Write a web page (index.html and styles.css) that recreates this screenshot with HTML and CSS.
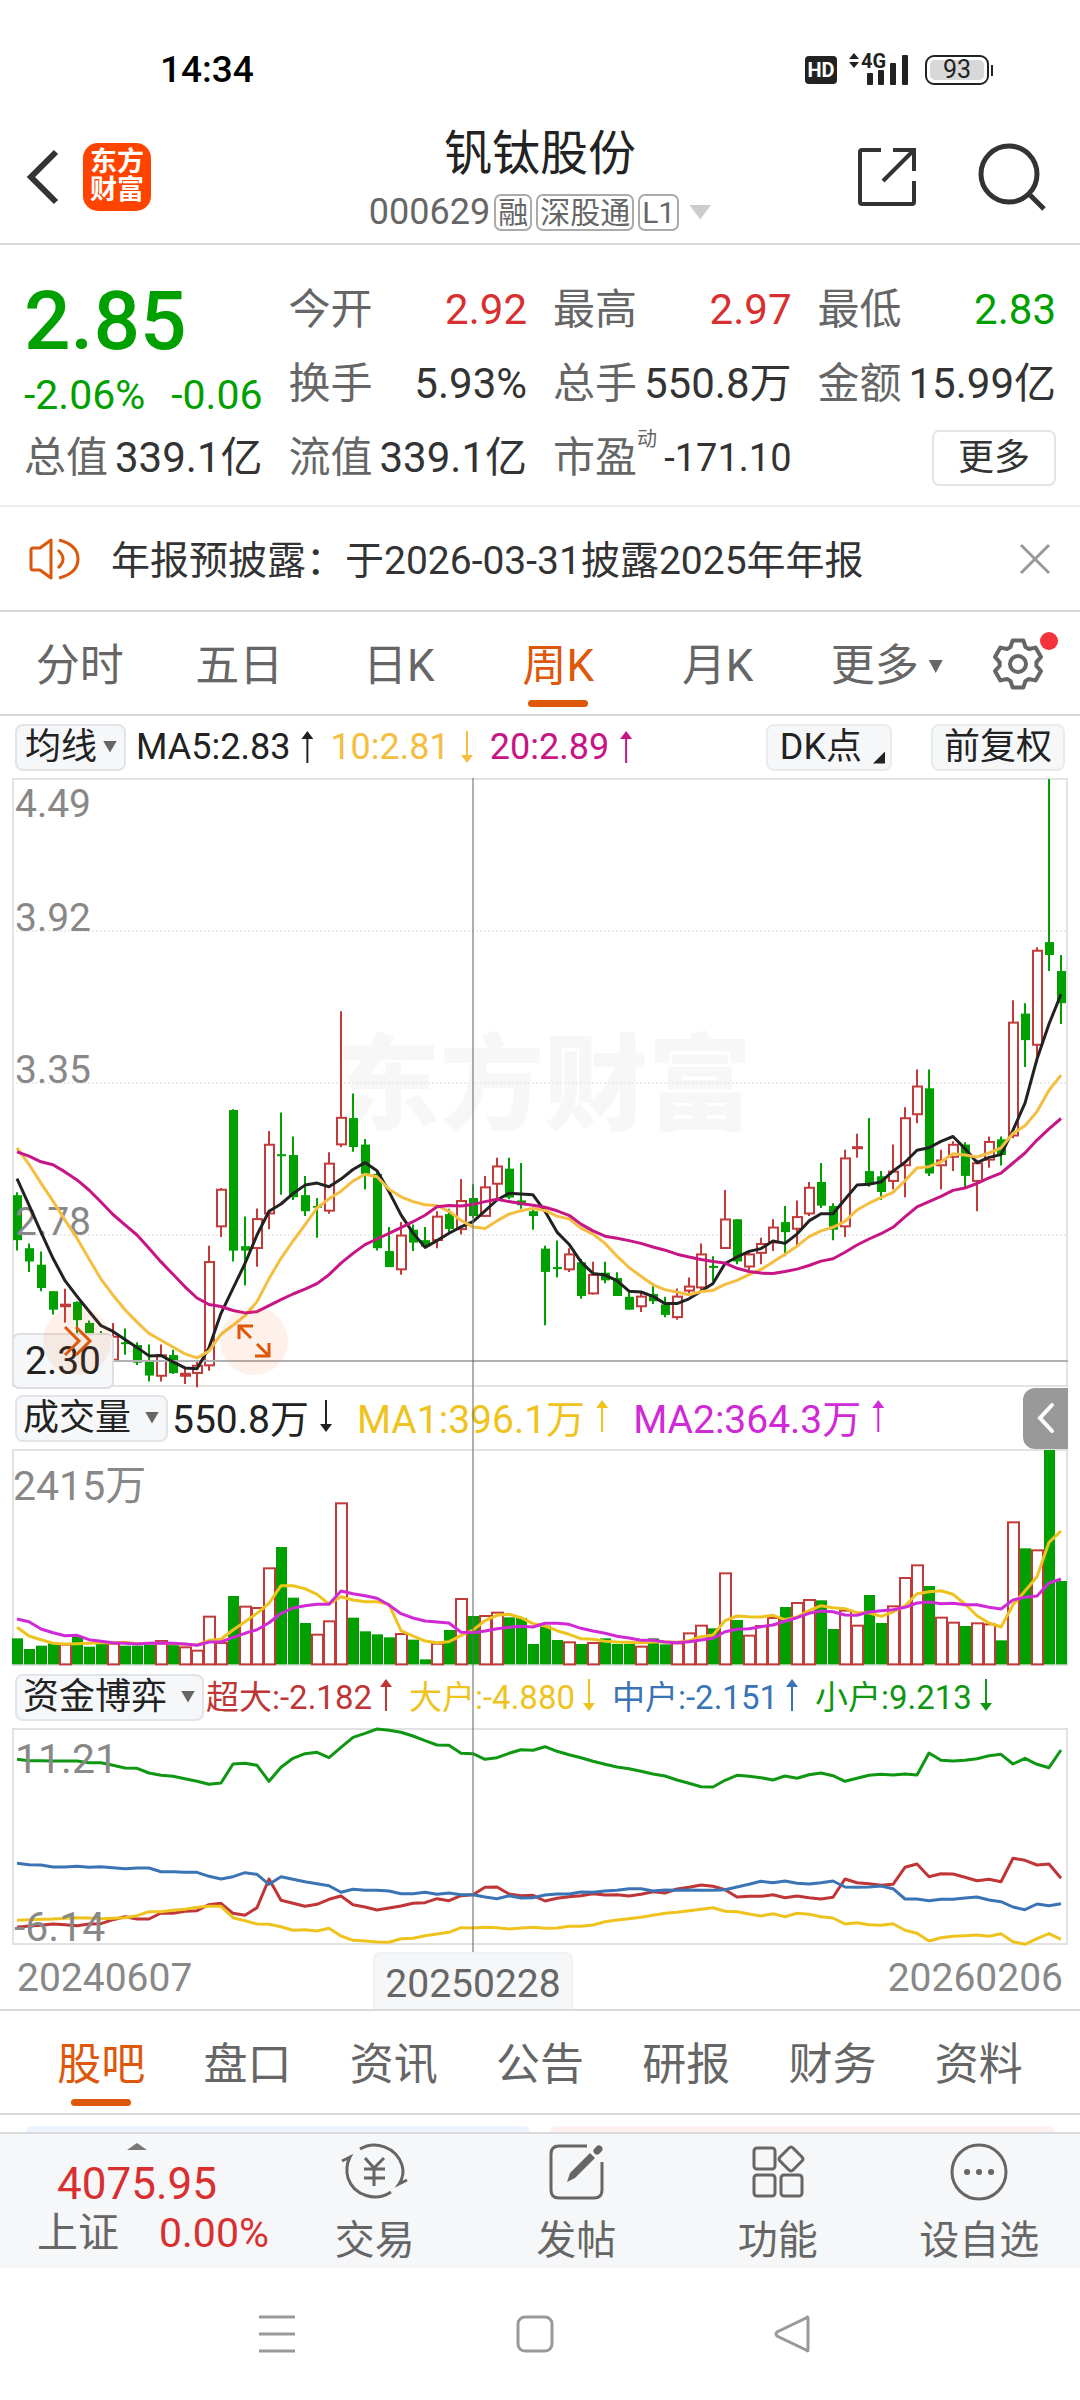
FILE: index.html
```html
<!DOCTYPE html>
<html lang="zh-CN">
<head>
  <meta charset="UTF-8" />
  <meta name="viewport" content="width=device-width, initial-scale=1.0"/>
  <title>钒钛股份 000629</title>
  <link rel="stylesheet" href="styles.css">
</head>
<body>
  <div class="status">
    <span class="clock">14:34</span>
    <div class="status-icons">
      <span class="hd">HD</span>
      <svg class="signal" width="60" height="36" viewBox="0 -4 60 36">
        <path d="M0 6L5 0L10 6ZM0 9H10L5 15Z"/>
        <rect x="18" y="20" width="6" height="12" rx="1"/>
        <rect x="29" y="17" width="6" height="15" rx="1"/>
        <rect x="41" y="10" width="6" height="22" rx="1"/>
        <rect x="53" y="2" width="6" height="30" rx="1"/>
        <text x="12" y="15">4G</text>
      </svg>
      <span class="battery"><span>93</span></span>
    </div>
  </div>

  <header class="header">
    <div class="header-left">
      <button class="icon-btn" aria-label="返回">
        <svg width="34" height="56" viewBox="0 0 34 56"><path d="M30 3L5 28L30 53" fill="none" stroke="#333" stroke-width="6"/></svg>
      </button>
      <div class="logo">东方<br>财富</div>
    </div>
    <div class="title">
      <h1>钒钛股份</h1>
      <div class="code">
        <span>000629</span>
        <span class="tag">融</span>
        <span class="tag">深股通</span>
        <span class="tag">L1</span>
        <i class="triangle light"></i>
      </div>
    </div>
    <div class="header-right">
      <button class="icon-btn" aria-label="分享">
        <svg width="58" height="58" viewBox="0 0 58 58" fill="none" stroke="#333" stroke-width="4">
          <path d="M23 2H4Q2 2 2 4V54Q2 56 4 56H54Q56 56 56 54V33M35 2H56V23M55 3L25 33"/>
        </svg>
      </button>
      <button class="icon-btn" aria-label="搜索">
        <svg width="68" height="68" viewBox="0 0 68 68" fill="none" stroke="#333" stroke-width="5">
          <circle cx="31" cy="31" r="28"/><path d="M51 51L66 66"/>
        </svg>
      </button>
    </div>
  </header>

  <section class="quote">
    <div class="price down">
      <strong>2.85</strong>
      <div class="change"><span>-2.06%</span><span>-0.06</span></div>
    </div>
    <div class="cell"><span>今开</span><b class="up">2.92</b></div>
    <div class="cell"><span>最高</span><b class="up">2.97</b></div>
    <div class="cell"><span>最低</span><b class="down">2.83</b></div>
    <div class="cell"><span>换手</span><b>5.93%</b></div>
    <div class="cell"><span>总手</span><b>550.8万</b></div>
    <div class="cell"><span>金额</span><b>15.99亿</b></div>
    <div class="cell"><span>总值</span><b>339.1亿</b></div>
    <div class="cell"><span>流值</span><b>339.1亿</b></div>
    <div class="cell pe"><span>市盈</span><small>动</small><b>-171.10</b></div>
    <div class="cell end"><button class="more-btn">更多</button></div>
  </section>

  <section class="notice">
    <svg width="52" height="44" viewBox="0 0 52 44" fill="none" stroke="#d9580d" stroke-width="3">
      <path d="M22 3V41L11 33H4Q2 33 2 31V13Q2 11 4 11H11Z" stroke-linejoin="round"/>
      <path d="M29 13Q39 22 29 31M30 3Q49 8 49 22T30 41"/>
    </svg>
    <p>年报预披露：于2026-03-31披露2025年年报</p>
    <button class="icon-btn" aria-label="关闭">
      <svg width="30" height="30" viewBox="0 0 30 30"><path d="M1 1L29 29M29 1L1 29" stroke="#999" stroke-width="3"/></svg>
    </button>
  </section>

  <nav class="periods">
    <button>分时</button>
    <button>五日</button>
    <button>日K</button>
    <button class="active">周K</button>
    <button>月K</button>
    <button>更多<i class="triangle small"></i></button>
    <button class="settings" aria-label="设置">
      <svg width="52" height="52" viewBox="0 0 52 52" fill="none" stroke="#666" stroke-width="4" stroke-linejoin="round">
        <path d="M20.6 2.6H31.4L33.5 9.1L36.9 11L43.6 9.6L49 19L44.4 24.1V27.9L49 33L43.6 42.4L36.9 41L33.5 42.9L31.4 49.4H20.6L18.5 42.9L15.1 41L8.4 42.4L3 33L7.6 27.9V24.1L3 19L8.4 9.6L15.1 11L18.5 9.1Z"/>
        <circle cx="26" cy="26" r="8"/>
      </svg>
      <i class="dot"></i>
    </button>
  </nav>

  <main class="charts">
    <div class="legend ma-legend">
      <span class="picker"><select aria-label="主图指标"><option>均线</option></select></span>
      <span class="c-dark">MA5:2.83<i class="arrow"></i></span>
      <span class="c-orange">10:2.81<i class="arrow fall"></i></span>
      <span class="c-pink">20:2.89<i class="arrow"></i></span>
      <button class="chip dk">DK点</button>
      <button class="chip">前复权</button>
    </div>
    <div class="plot">
      <svg id="price-chart" viewBox="0 0 1056 609"></svg>
      <button class="float-btn forward" aria-label="前进">
        <svg width="28" height="32" viewBox="0 0 28 32"><path d="M2 2L16 16L2 30M13 2L27 16L13 30"/></svg>
      </button>
      <button class="float-btn expand" aria-label="放大">
        <svg width="34" height="34" viewBox="0 0 34 34"><path d="M2 15V2H16M2 2L14 14M32 19V32H18M32 32L20 20"/></svg>
      </button>
    </div>

    <div class="legend vol-legend">
      <span class="picker wide"><select aria-label="副图指标一"><option>成交量</option></select></span>
      <span class="c-dark">550.8万<i class="arrow fall"></i></span>
      <span class="c-yellow">MA1:396.1万<i class="arrow"></i></span>
      <span class="c-purple">MA2:364.3万<i class="arrow"></i></span>
      <button class="collapse" aria-label="展开侧栏">
        <svg width="18" height="30" viewBox="0 0 18 30"><path d="M15 2L3 15L15 28" fill="none" stroke="#fff" stroke-width="4" stroke-linecap="round"/></svg>
      </button>
    </div>
    <div class="plot"><svg id="volume-chart" viewBox="0 0 1056 217"></svg></div>

    <div class="legend fund-legend">
      <span class="picker wide"><select aria-label="副图指标二"><option>资金博弈</option></select></span>
      <span class="c-red">超大:-2.182<i class="arrow"></i></span>
      <span class="c-yellow">大户:-4.880<i class="arrow fall"></i></span>
      <span class="c-blue">中户:-2.151<i class="arrow"></i></span>
      <span class="c-green">小户:9.213<i class="arrow fall"></i></span>
    </div>
    <div class="plot"><svg id="fund-chart" viewBox="0 0 1056 217"></svg></div>

    <div class="dates"><span>20240607</span><span>20260206</span></div>
    <div class="crosshair"></div>
    <div class="date-tip">20250228</div>
  </main>

  <nav class="sections">
    <button class="active">股吧</button>
    <button>盘口</button>
    <button>资讯</button>
    <button>公告</button>
    <button>研报</button>
    <button>财务</button>
    <button>资料</button>
  </nav>
  <div class="cards"><div class="card blue"></div><div class="card pink"></div></div>

  <footer class="toolbar">
    <div class="index">
      <i class="triangle flip"></i>
      <strong>4075.95</strong>
      <div><span>上证</span><b>0.00%</b></div>
    </div>
    <button>
      <svg width="66" height="60" viewBox="0 0 66 60">
        <path d="M18 7C33 -2 54 5 60 23Q63 33 57 42L65 38M49 50C34 60 12 54 6 36Q3 25 8 15L0 19"/>
        <path d="M23 16L32 26L42 16M32 26V44M22 27H43M22 36H43"/>
      </svg>
      交易
    </button>
    <button>
      <svg width="56" height="60" viewBox="0 0 56 60">
        <path d="M39 4H11Q3 4 3 12V48Q3 56 11 56H46Q54 56 54 48V20"/>
        <path d="M49 9L51 7" stroke-width="7" stroke-linecap="round"/>
        <path d="M42 11L47 16L27 36L19 40L22 31Z" fill="#666" stroke="none"/>
      </svg>
      发帖
    </button>
    <button>
      <svg width="54" height="60" viewBox="0 0 54 60">
        <rect x="3" y="6" width="21" height="21" rx="3"/>
        <rect x="3" y="33" width="21" height="21" rx="3"/>
        <rect x="30" y="33" width="21" height="21" rx="3"/>
        <path d="M38 6Q40 4 42 6L51 15Q53 17 51 19L42 28Q40 30 38 28L29 19Q27 17 29 15Z"/>
      </svg>
      功能
    </button>
    <button>
      <svg width="60" height="60" viewBox="0 0 60 60">
        <circle cx="30" cy="30" r="27"/>
        <path d="M18 30H18.1M30 30H30.1M42 30H42.1" stroke-width="6" stroke-linecap="round"/>
      </svg>
      设自选
    </button>
  </footer>

  <div class="sysnav">
    <button aria-label="最近任务"><svg width="38" height="38" viewBox="0 0 38 38"><path d="M1 2H37M1 19H37M1 36H37"/></svg></button>
    <button aria-label="主屏幕"><svg width="38" height="38" viewBox="0 0 38 38"><rect x="2" y="2" width="34" height="34" rx="7"/></svg></button>
    <button aria-label="后退"><svg width="38" height="38" viewBox="0 0 38 38"><path d="M34 3V35Q34 37 32 35L3 21Q1 19 3 17L32 3Q34 1 34 3Z"/></svg></button>
  </div>

  <script src="script.js"></script>
</body>
</html>
```
FILE: styles.css
```css
:root {
  --text: #333;
  --muted: #666;
  --axis: #888;
  --line: #d8dadc;
  --panel: #f6f7f9;
  --accent: #dd580a;
  --up: #d83030;
  --down: #00a000;
}
* {
  box-sizing: border-box;
}
body {
  margin: 0;
  background: #fff;
  color: var(--text);
  font-family: Roboto, "Noto Sans CJK SC", sans-serif;
}
button, select {
  font: inherit;
  color: inherit;
  border: none;
  background: none;
  padding: 0;
  margin: 0;
  cursor: pointer;
}
h1, p {
  margin: 0;
  font-weight: 400;
}
b {
  font-weight: 400;
}
svg {
  display: block;
  overflow: visible;
}
.up {
  color: var(--up);
}
.down {
  color: var(--down);
}
.triangle {
  display: inline-block;
  width: 22px;
  height: 15px;
  background: #ccc;
  clip-path: polygon(0 0, 100% 0, 50% 100%);
}

/* status bar */
.status {
  display: flex;
  justify-content: space-between;
  align-items: center;
  height: 92px;
  padding: 48px 91px 0 160px;
}
.clock {
  font-size: 37px;
  font-weight: 500;
  line-height: 44px;
  color: #000;
}
.status-icons {
  display: flex;
  align-items: center;
  gap: 12px;
}
.hd {
  width: 32px;
  height: 28px;
  border-radius: 4px;
  background: #222;
  color: #fff;
  font-size: 20px;
  font-weight: 700;
  line-height: 28px;
  text-align: center;
}
.signal {
  fill: #222;
  margin-bottom: 6px;
}
.signal text {
  font-size: 20px;
  font-weight: 700;
  stroke: #fff;
  stroke-width: 2px;
  paint-order: stroke;
}
.battery {
  position: relative;
  width: 64px;
  height: 30px;
  margin-left: 4px;
  padding: 3px;
  border: 2px solid #222;
  border-radius: 9px;
}
.battery span {
  display: block;
  height: 20px;
  border-radius: 5px;
  background: #d8d8d8;
  color: #222;
  font-size: 25px;
  line-height: 20px;
  text-align: center;
}
.battery::after {
  content: "";
  position: absolute;
  right: -6px;
  top: 8px;
  width: 2px;
  height: 11px;
  background: #222;
}

/* header */
.header {
  display: grid;
  grid-template-columns: 1fr auto 1fr;
  align-items: center;
  height: 153px;
  padding: 18px 26px 0;
  border-bottom: 2px solid var(--line);
}
.header-left, .header-right {
  display: flex;
  align-items: center;
}
.header-left {
  gap: 23px;
}
.header-right {
  justify-content: flex-end;
  gap: 62px;
  padding-right: 8px;
}
.logo {
  width: 68px;
  height: 68px;
  padding: 5px 0;
  border-radius: 15px;
  background: #ff4400;
  color: #fff;
  font-size: 27px;
  font-weight: 700;
  line-height: 28px;
  text-align: center;
}
.title {
  padding-top: 11px;
}
.title h1 {
  font-size: 48px;
  line-height: 60px;
  text-align: center;
  color: #222;
}
.code {
  display: flex;
  align-items: center;
  gap: 4px;
  height: 56px;
  color: var(--muted);
  font-size: 36px;
}
.tag {
  height: 37px;
  padding: 0 2px;
  border: 2px solid #aaa;
  border-radius: 7px;
  font-size: 30px;
  line-height: 33px;
}
.code .triangle {
  margin-left: 6px;
}

/* quote */
.quote {
  display: grid;
  grid-template-columns: repeat(4, minmax(0, 1fr));
  grid-auto-rows: 74px;
  column-gap: 26px;
  padding: 28px 24px 10px;
  border-bottom: 2px solid #ececec;
  font-size: 42px;
  line-height: 74px;
}
.price {
  grid-row: span 2;
}
.price strong {
  display: block;
  font-size: 82px;
  font-weight: 500;
  line-height: 96px;
}
.change, .cell {
  display: flex;
  justify-content: space-between;
  white-space: nowrap;
}
.change {
  font-size: 41px;
  line-height: 52px;
}
.cell span, .cell small {
  color: var(--muted);
}
.cell small {
  font-size: 20px;
  line-height: 36px;
}
.cell.pe b {
  margin-left: auto;
  font-size: 38px;
}
.cell.end {
  justify-content: flex-end;
  align-items: center;
}
.more-btn {
  width: 124px;
  height: 56px;
  border: 2px solid #e4e4e4;
  border-radius: 7px;
  font-size: 36px;
  line-height: 50px;
}

/* notice */
.notice {
  display: flex;
  align-items: center;
  height: 105px;
  padding: 0 30px 0 29px;
  border-bottom: 2px solid var(--line);
  font-size: 39px;
}
.notice p {
  flex: 1;
  margin-left: 30px;
  padding-bottom: 4px;
}

/* tab bars */
.periods, .sections {
  display: flex;
  border-bottom: 2px solid var(--line);
  font-size: 44px;
  line-height: 104px;
  color: var(--muted);
}
.periods button, .sections button {
  position: relative;
  flex: 1;
  height: 102px;
  padding-top: 2px;
  white-space: nowrap;
}
.periods .settings {
  flex: 0 0 104px;
  padding-left: 16px;
}
.periods button:nth-child(6) {
  flex-grow: 1.12;
}
.sections {
  padding: 0 28px;
  margin-bottom: 11px;
  border-top: 2px solid var(--line);
}
.active {
  color: var(--accent);
}
.active::after {
  content: "";
  position: absolute;
  left: 50%;
  bottom: 7px;
  width: 60px;
  height: 7px;
  margin-left: -30px;
  border-radius: 4px;
  background: var(--accent);
}
.triangle.small {
  width: 14px;
  height: 13px;
  margin: 0 0 8px 10px;
  background: var(--muted);
}
.dot {
  position: absolute;
  left: 64px;
  top: 20px;
  width: 18px;
  height: 18px;
  border-radius: 50%;
  background: #f5333a;
}

/* charts */
.charts {
  position: relative;
}
.legend {
  display: flex;
  align-items: center;
  gap: 17px;
  height: 62px;
  padding: 0 15px;
  font-size: 36px;
  white-space: nowrap;
}
.legend > span:not(.picker) {
  display: flex;
  align-items: center;
  gap: 11px;
}
.legend.vol-legend {
  gap: 25px;
  padding-right: 12px;
  font-size: 39px;
}
.vol-legend > span:not(.picker), .fund-legend > span:not(.picker) {
  padding-bottom: 4px;
}
.fund-legend {
  font-size: 33px;
}
.legend.fund-legend > span:not(.picker) {
  gap: 8px;
}
.legend .picker {
  position: relative;
  margin-right: -7px;
}
.vol-legend .picker {
  margin-right: -21px;
}
.fund-legend .picker {
  margin-right: -15px;
}
.picker select {
  display: block;
  appearance: none;
  height: 47px;
  padding: 0 26px 0 8px;
  border: 2px solid #e1e4e8;
  border-radius: 8px;
  background: var(--panel);
  color: #222;
  font-size: 36px;
  line-height: 42px;
}
.picker.wide select {
  padding: 0 34px 0 6px;
}
.picker::after {
  content: "";
  position: absolute;
  right: 9px;
  top: 17px;
  width: 14px;
  height: 12px;
  background: var(--muted);
  clip-path: polygon(0 0, 100% 0, 50% 100%);
  pointer-events: none;
}
.arrow {
  width: 12px;
  height: 32px;
  background: currentColor;
  clip-path: polygon(50% 0, 100% 8px, 7px 8px, 7px 100%, 5px 100%, 5px 8px, 0 8px);
}
.arrow.fall {
  transform: rotate(180deg);
}
.chip {
  height: 47px;
  padding: 0 11px;
  border: 2px solid #e8ebee;
  border-radius: 8px;
  background: var(--panel);
  color: #222;
  line-height: 42px;
}
.chip.dk {
  position: relative;
  margin-left: auto;
  margin-right: 22px;
  padding: 0 28px 0 12px;
}
.chip.dk::after {
  content: "";
  position: absolute;
  right: 5px;
  bottom: 5px;
  width: 12px;
  height: 12px;
  background: #222;
  clip-path: polygon(100% 0, 100% 100%, 0 100%);
}
.collapse {
  display: flex;
  align-items: center;
  justify-content: center;
  width: 45px;
  height: 61px;
  margin-left: auto;
  border-radius: 12px 0 0 12px;
  background: #999;
}
.plot {
  position: relative;
  margin: 0 12px;
}
.plot > svg {
  width: 100%;
}
.float-btn {
  position: absolute;
  bottom: 12px;
  display: flex;
  align-items: center;
  justify-content: center;
  width: 68px;
  height: 68px;
  border-radius: 50%;
  background: rgba(240, 100, 20, 0.09);
}
.float-btn path {
  fill: none;
  stroke: var(--accent);
  stroke-width: 3;
}
.forward {
  left: 31px;
}
.expand {
  left: 208px;
}
.crosshair {
  position: absolute;
  left: 43.8%;
  top: 62px;
  bottom: 56px;
  width: 2px;
  margin-left: -1px;
  background: rgba(110, 110, 110, 0.55);
}
.dates {
  display: flex;
  justify-content: space-between;
  height: 64px;
  padding: 3px 17px 0;
  color: var(--axis);
  font-size: 39px;
  line-height: 60px;
}
.date-tip {
  position: absolute;
  left: 43.8%;
  bottom: 0;
  width: 200px;
  height: 57px;
  margin-left: -100px;
  border: 2px solid #eff1f3;
  border-bottom: none;
  border-radius: 7px 7px 0 0;
  background: var(--panel);
  color: var(--muted);
  font-size: 39px;
  line-height: 60px;
  text-align: center;
}
.c-dark { color: #222; }
.c-orange { color: #f5be41; }
.c-pink { color: #c71585; }
.c-yellow { color: #efc31e; }
.c-purple { color: #d02ad6; }
.c-red { color: #c03535; }
.c-blue { color: #3a74b5; }
.c-green { color: #0f9612; }

/* drawing */
.frame { fill: none; stroke: #e2e2e2; stroke-width: 2; }
.grid { stroke: #ececec; stroke-width: 2; stroke-dasharray: 2 2; }
.cross { stroke: #b0b0b0; stroke-width: 2; }
.axis { fill: var(--axis); font-size: 39px; }
.axis-large { fill: var(--axis); font-size: 41px; }
.watermark { fill: #f7f7f7; font-size: 104px; font-weight: 900; }
.bar-up { fill: #fff; stroke: #c23b3a; stroke-width: 2; }
.bar-down { fill: var(--down); }
.wick-up { stroke: #c23b3a; stroke-width: 2; }
.wick-down { stroke: var(--down); stroke-width: 2; }
.series { fill: none; stroke: currentColor; stroke-width: 3; stroke-linejoin: round; }
.tip { fill: var(--panel); stroke: #dcdfe3; stroke-width: 2; }
.tip-text { fill: #222; font-size: 39px; }

/* bottom */
.cards {
  display: grid;
  grid-template-columns: 1fr 1fr;
  gap: 20px;
  height: 6px;
  padding: 0 26px;
}
.card {
  border-radius: 8px 8px 0 0;
}
.card.blue {
  background: #edf4fe;
}
.card.pink {
  background: #fff1f0;
}
.toolbar {
  display: grid;
  grid-template-columns: 274px repeat(4, 1fr);
  height: 136px;
  border-top: 2px solid var(--line);
  background: var(--panel);
  color: var(--muted);
  font-size: 40px;
}
.toolbar button {
  display: flex;
  flex-direction: column;
  align-items: center;
  padding-top: 8px;
  line-height: 78px;
}
.toolbar button svg {
  fill: none;
  stroke: var(--muted);
  stroke-width: 3;
}
.index {
  display: flex;
  flex-direction: column;
  align-items: center;
  padding-top: 9px;
}
.triangle.flip {
  width: 20px;
  height: 7px;
  background: #777;
  transform: rotate(180deg);
}
.index strong {
  color: var(--up);
  font-size: 44px;
  font-weight: 400;
  line-height: 68px;
}
.index div {
  display: flex;
  gap: 40px;
  padding-left: 32px;
  font-size: 41px;
  line-height: 30px;
}
.index b {
  color: var(--up);
}
.index span, .index b {
  white-space: nowrap;
}
.sysnav {
  display: flex;
  justify-content: center;
  gap: 220px;
  padding: 47px 11px 47px 0;
}
.sysnav svg {
  fill: none;
  stroke: #999;
  stroke-width: 3;
}
```
FILE: script.js
```js
const STEP = 12;
const FIRST = 5;

// weekly candles: direction, high, body top, body bottom, low
const candles = [
  ["d",1051,1058,1170,1196],["d",1178,1190,1223,1249],["d",1198,1231,1289,1297],["d",1297,1297,1343,1355],
  ["u",1291,1328,1337,1375],["d",1322,1324,1369,1401],["d",1370,1376,1420,1430],["d",1396,1410,1440,1450],
  ["u",1376,1408,1470,1487],["d",1390,1424,1429,1455],["d",1424,1431,1475,1481],["d",1430,1469,1507,1522],
  ["u",1430,1454,1510,1522],["d",1443,1456,1501,1503],["u",1487,1500,1510,1528],["u",1470,1480,1503,1536],
  ["u",1184,1222,1484,1495],["u",1040,1042,1138,1162],["d",844,846,1196,1223],["d",1111,1185,1196,1283],
  ["u",1091,1115,1192,1236],["u",898,930,1106,1143],["d",852,956,961,1057],["d",912,958,1063,1070],
  ["d",1010,1058,1098,1110],["d",1065,1085,1089,1164],["u",951,977,1099,1104],["u",600,863,934,938],
  ["d",805,866,938,950],["d",918,932,1005,1044],["d",997,1005,1190,1196],["d",1137,1197,1237,1237],
  ["u",1125,1156,1245,1256],["d",1131,1144,1176,1197],["d",1137,1170,1186,1188],["u",1098,1109,1172,1190],
  ["d",1092,1105,1142,1150],["u",1018,1070,1145,1156],["d",1031,1065,1110,1115],["u",1010,1036,1112,1112],
  ["u",965,984,1032,1068],["d",965,992,1064,1068],["d",978,1071,1083,1092],["d",1092,1098,1110,1144],
  ["d",1184,1191,1249,1382],["d",1171,1237,1242,1263],["u",1190,1203,1245,1249],["d",1217,1225,1309,1316],
  ["u",1224,1254,1305,1305],["d",1224,1251,1270,1277],["d",1250,1264,1309,1309],["d",1297,1311,1343,1343],
  ["u",1297,1308,1337,1349],["d",1277,1304,1322,1329],["d",1311,1330,1356,1362],["u",1290,1308,1364,1368],
  ["u",1263,1283,1298,1303],["u",1178,1203,1290,1296],["d",1210,1234,1239,1272],["u",1045,1116,1192,1192],
  ["d",1118,1118,1223,1230],["u",1198,1203,1238,1244],["u",1164,1177,1204,1230],["u",1118,1136,1178,1197],
  ["d",1085,1125,1150,1210],["u",1071,1110,1144,1184],["u",1025,1037,1106,1110],["d",978,1025,1084,1090],
  ["d",1078,1085,1144,1170],["u",945,964,1138,1162],["u",905,936,941,965],["d",866,998,1032,1037],
  ["d",998,1011,1050,1070],["u",932,997,1025,1043],["u",839,864,986,1063],["u",745,785,859,879],
  ["d",745,792,1004,1010],["u",945,969,986,1044],["u",924,930,965,998],["d",926,932,1010,1038],
  ["u",970,976,1025,1098],["u",912,923,972,990],["d",912,919,958,984],["u",573,626,912,916],
  ["d",580,606,672,739],["u",441,447,686,728],["d",22,428,460,500],["d",460,500,580,632]
];

const ma5 = [
  1017,1083,1150,1215,1271,1310,1347,1383,1397,1417,1437,1458,1457,1473,1488,1490,1438,1352,1290,1228,
  1157,1098,1080,1054,1033,1028,1037,1018,994,977,997,1049,1107,1152,1188,1171,1153,1137,1124,1097,
  1070,1053,1055,1057,1098,1150,1180,1224,1253,1257,1271,1297,1299,1310,1328,1328,1316,1297,1278,1228,
  1212,1198,1191,1172,1178,1155,1122,1104,1104,1068,1033,1031,1025,998,976,946,940,924,912,942,
  977,964,957,896,829,719,632,558
];
const ma10 = [
  940,981,1028,1073,1120,1165,1217,1267,1307,1343,1374,1402,1419,1436,1453,1463,1446,1404,1382,1358,
  1323,1266,1215,1172,1132,1090,1067,1048,1023,1006,1012,1043,1062,1074,1082,1084,1098,1121,1137,1141,
  1122,1105,1097,1091,1096,1110,1117,1140,1155,1178,1210,1238,1260,1281,1293,1299,1306,1298,1295,1280,
  1270,1256,1243,1224,1205,1185,1161,1147,1138,1123,1095,1078,1064,1051,1022,990,987,975,955,958,
  963,953,940,904,885,850,797,759
];
const ma20 = [
  950,961,975,982,1000,1020,1045,1075,1106,1132,1157,1190,1224,1255,1286,1314,1330,1335,1345,1351,
  1348,1333,1318,1304,1292,1278,1256,1227,1203,1181,1167,1153,1139,1124,1108,1087,1084,1085,1081,1074,
  1068,1074,1079,1083,1088,1097,1108,1130,1147,1160,1165,1171,1178,1187,1195,1205,1212,1218,1223,1227,
  1240,1248,1252,1253,1248,1242,1233,1222,1216,1200,1182,1167,1154,1138,1112,1087,1074,1061,1046,1040,
  1029,1015,1003,978,953,921,893,867
];

// volume bar tops
const volumes = [
  775,807,797,790,794,770,800,792,791,797,797,795,783,795,802,812,710,789,648,680,
  684,565,501,653,729,764,724,370,713,754,763,772,762,779,838,791,750,657,708,708,
  698,712,714,792,737,780,787,792,789,775,792,792,800,775,793,790,760,737,745,580,
  720,767,738,714,681,669,660,661,747,692,737,645,729,679,594,556,618,713,728,738,
  730,733,781,427,505,511,210,603
];
// weeks drawn hollow in the volume chart although the candle is solid
const hollow = [19, 25];
const volMa1 = [
  742,768,779,790,792,791,790,788,788,787,791,790,790,791,793,795,781,778,750,725,
  700,670,617,617,626,643,672,650,660,665,665,673,752,768,783,788,785,767,750,722,
  706,703,713,731,738,752,763,776,778,784,786,787,788,786,785,787,782,770,765,722,
  708,710,711,706,719,711,692,677,683,686,698,698,709,696,678,641,635,632,643,672,
  707,729,741,675,633,590,487,453
];
const volMa2 = [
  717,725,747,758,767,766,779,784,788,790,792,790,789,790,792,796,786,786,772,760,
  749,728,700,684,677,673,673,633,641,647,655,675,701,714,723,726,729,757,758,753,
  746,742,739,741,730,730,733,745,753,760,769,774,781,781,786,788,785,780,775,755,
  748,746,740,735,724,713,700,693,695,705,706,696,692,689,682,669,666,671,670,674,
  674,682,687,660,652,648,609,597
];

const small = [
  268,272,272,273,273,273,278,278,286,294,295,309,316,319,326,334,343,339,282,280,
  286,334,292,265,251,247,263,232,202,190,177,181,187,198,212,225,226,250,251,268,
  263,250,239,241,230,244,254,263,274,283,291,296,304,312,318,330,340,350,351,331,
  316,319,323,330,318,325,314,309,317,334,325,316,313,315,312,315,249,271,273,271,
  266,257,253,282,265,283,293,240
];
const medium = [
  580,584,585,591,591,589,592,590,593,596,594,594,605,605,607,607,619,627,620,608,
  613,643,620,628,635,641,647,667,658,661,661,663,671,671,667,673,669,674,674,681,
  686,677,684,683,675,672,672,666,667,663,661,656,656,663,660,661,660,661,661,659,
  651,643,634,638,633,640,642,638,633,651,652,651,648,656,687,687,692,688,688,684,
  681,690,695,711,719,702,707,701
];
const superBig = [
  772,768,766,762,764,767,762,761,749,740,747,747,729,730,724,722,704,700,730,736,
  713,627,691,700,709,703,688,678,704,711,720,714,708,700,698,686,692,677,674,652,
  651,672,677,676,693,685,680,677,671,675,674,678,673,665,669,657,652,645,649,659,
  681,679,679,674,683,678,683,687,682,627,638,641,646,643,592,582,620,611,612,622,
  632,628,635,565,571,585,582,625
];
const big = [
  751,749,748,747,745,743,744,746,745,743,737,725,725,721,718,712,709,709,743,752,
  762,763,770,781,779,783,775,798,811,813,816,817,806,805,797,792,787,773,774,772,
  773,777,774,772,775,774,769,769,765,755,750,746,742,736,730,727,722,718,713,724,
  725,732,738,731,740,730,733,740,744,762,758,764,766,761,781,790,813,803,799,797,
  795,799,791,815,823,806,791,808
];

// maps [top, bottom] of the data onto the inside of a frame
function scale(top, bottom, height) {
  return v => 1 + (v - top) * (height - 2) / (bottom - top);
}
const xAt = i => FIRST + i * STEP;

function frame(height) {
  return `<rect class="frame" x="1" y="1" width="1054" height="${height - 2}"/>`;
}
function text(cls, x, y, value) {
  return `<text class="${cls}" x="${x}" y="${y}">${value}</text>`;
}
function line(cls, values, y) {
  const points = values.map((v, i) => `${xAt(i)},${y(v).toFixed(1)}`).join(" ");
  return `<polyline class="series ${cls}" points="${points}"/>`;
}

function drawPrice() {
  const y = scale(22, 1533, 609);
  let out = text("watermark", 324, 344, "东方财富") + frame(609);
  [153, 305, 457].forEach(g => {
    out += `<line class="grid" x1="0" x2="1056" y1="${g}" y2="${g}"/>`;
  });
  candles.forEach(([dir, high, top, bottom, low], i) => {
    const x = xAt(i);
    const cls = dir === "u" ? "up" : "down";
    out += `<line class="wick-${cls}" x1="${x}" x2="${x}" y1="${y(high)}" y2="${y(low)}"/>`;
    if (dir === "u") {
      const h = Math.max(y(bottom) - y(top) - 2, 1);
      out += `<rect class="bar-up" x="${x - 4}" y="${y(top) + 1}" width="9" height="${h}"/>`;
    } else {
      out += `<rect class="bar-down" x="${x - 4}" y="${y(top)}" width="9" height="${y(bottom) - y(top)}"/>`;
    }
  });
  out += `<line class="cross" x1="0" x2="1056" y1="583" y2="583"/>`;
  out += text("axis", 3, 39, "4.49") + text("axis", 3, 153, "3.92");
  out += text("axis", 3, 305, "3.35") + text("axis", 3, 457, "2.78");
  out += line("c-dark", ma5, y) + line("c-orange", ma10, y) + line("c-pink", ma20, y);
  out += `<rect class="tip" x="1" y="556" width="100" height="54" rx="6"/>`;
  out += text("tip-text", 13, 596, "2.30");
  document.getElementById("price-chart").innerHTML = out;
}

function drawVolume() {
  const y = scale(210, 855, 217);
  const base = y(853);
  let out = frame(217);
  volumes.forEach((v, i) => {
    const x = xAt(i);
    if (candles[i][0] === "u" || hollow.includes(i)) {
      out += `<rect class="bar-up" x="${x - 5}" y="${y(v)}" width="11" height="${base - y(v)}"/>`;
    } else {
      out += `<rect class="bar-down" x="${x - 5}" y="${y(v)}" width="11" height="${base - y(v)}"/>`;
    }
  });
  out += line("c-yellow", volMa1, y) + line("c-purple", volMa2, y);
  out += text("axis-large", 1, 51, "2415万");
  document.getElementById("volume-chart").innerHTML = out;
}

function drawFund() {
  const y = scale(177, 822, 217);
  let out = frame(217);
  out += line("c-green", small, y) + line("c-red", superBig, y);
  out += line("c-yellow", big, y) + line("c-blue", medium, y);
  out += text("axis-large", 3, 45, "11.21") + text("axis-large", 2, 213, "-6.14");
  document.getElementById("fund-chart").innerHTML = out;
}

drawPrice();
drawVolume();
drawFund();
```
